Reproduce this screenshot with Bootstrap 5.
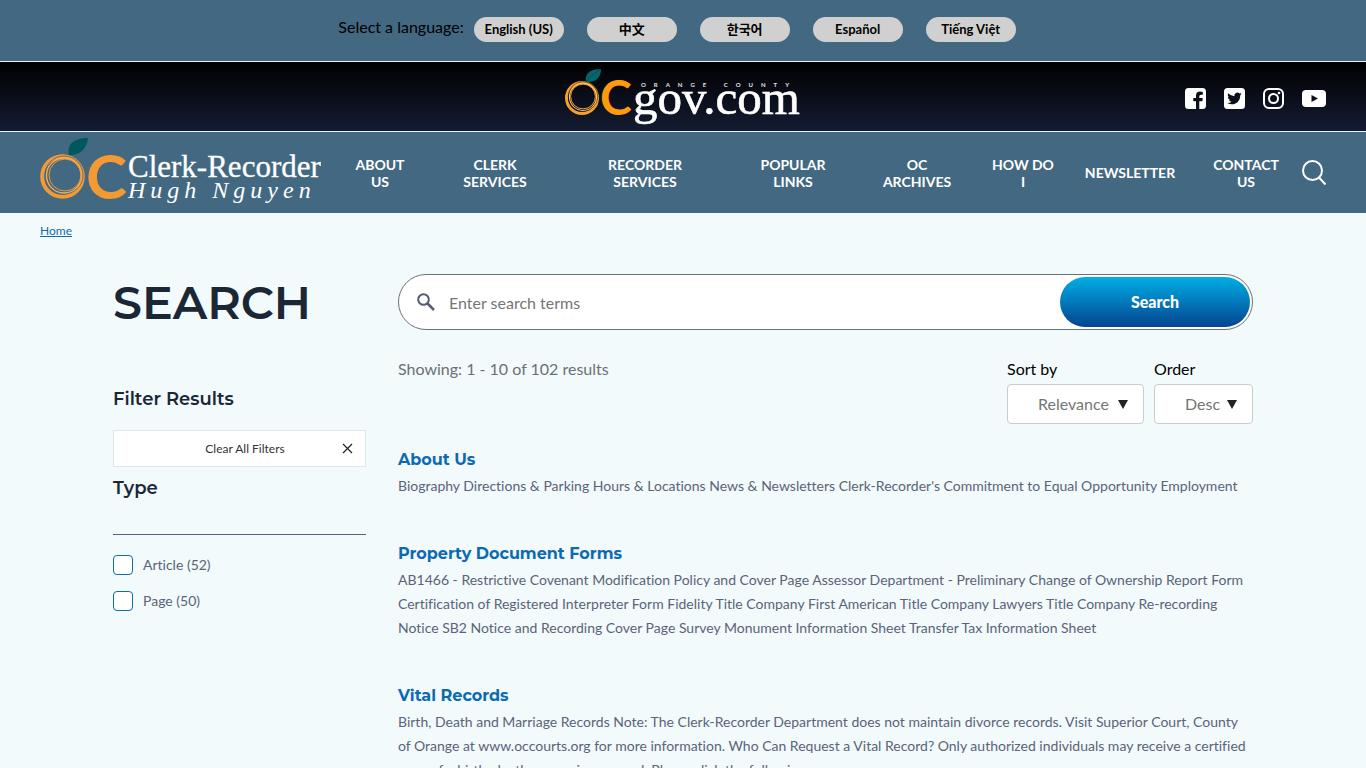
<!DOCTYPE html>
<html lang="en">
<head>
<meta charset="utf-8">
<meta name="viewport" content="width=device-width, initial-scale=1">
<title>Search | OC Clerk-Recorder</title>
<link rel="stylesheet" href="https://cdn.jsdelivr.net/npm/bootstrap@5.3.0/dist/css/bootstrap.min.css">
<style>
  body { font-family: Lato, "Noto Sans CJK SC", "Noto Sans CJK KR", sans-serif; font-size: 16px; font-variant-ligatures: none; background: #f2fafc; color: #000; }
  .bar-blue { background: #436881; }
  .lang-bar { height: 62px; padding: 15px 12px 0 0; border-bottom: 1px solid #e9f2fb; }
  .lang-list { gap: 23px; margin: 2px 0 0 10px; }
  .btn-lang { width: 90px; height: 25px; padding: 0; font-size: 13px; font-weight: 700; line-height: 25px; background: #d1d0d0; color: #000; }
  .gov-bar { height: 70px; padding: 0 40px; background: linear-gradient(#000, #141c33); border-bottom: 1px solid #e9f2fb; }
  .side-cell { flex: 1 1 0; }
  .socials { gap: 18px; padding-top: 4px; color: #fff; }
  .socials a { color: #fff; display: flex; }
  .main-nav { height: 81px; padding: 0 40px; }
  .menu-grid { display: grid; grid-template-columns: 96fr 134fr 166fr 130fr 118fr 94fr 120fr 112fr; margin-left: 11px; }
  .menu-grid a { color: #fff; font-size: 14px; font-weight: 700; line-height: 17px; text-align: center; text-decoration: none; }
  .crumbs { padding: 9px 40px 0; font-size: 12px; line-height: 18px; }
  .crumbs a { color: #0c6ab0; }
  .layout { gap: 32px; padding-top: 34px; }
  .side { flex: 0 0 253px; }
  h1, h2, h3 { font-family: Montserrat, Inter, sans-serif; color: #1b2735; margin: 0; }
  h1 { font-size: 46px; font-weight: 600; line-height: 58px; }
  .side h2 { font-size: 18px; font-weight: 600; line-height: 24px; }
  .side .filter-head { margin-top: 55px; }
  .btn-clear { height: 37px; margin-top: 19px; padding: 0 12px 0 34px; background: #fff; border: 1px solid #dfe6ec; border-radius: 0; font-size: 12px; color: #333; }
  .type-head { margin-top: 9px; padding-bottom: 34px; border-bottom: 1px solid #5b6378; }
  .facets { gap: 12px; padding-top: 18px; font-size: 14px; line-height: 24px; color: #5b6378; }
  .facets .form-check-input { width: 20px; height: 20px; margin: 0 10px 0 0; border: 1px solid #0c6ab0; border-radius: 4px; background-color: #fff; }
  .search-box { height: 56px; padding: 2px 2px 2px 18px; border: 1px solid #6b7075; border-radius: 28px; background: #fff; }
  .search-box input { font-size: 16px; color: #757575; padding: 2px 14px 0; }
  .search-box input::placeholder { color: #757575; opacity: 1; }
  .btn-find { flex: 0 0 190px; height: 50px; border: 0; border-radius: 25px; font-size: 16px; font-weight: 900; color: #fff; background: linear-gradient(#00aee6, #04448f); }
  .tools { margin-top: 27px; line-height: 24px; }
  .showing { color: #6d7073; }
  .pickers { gap: 10px; }
  .pickers .form-select { height: 40px; margin-top: 3px; padding: 0 32px 0 30px; border: 1px solid #ccc; border-radius: 4px; color: #757575; background-position: right 14px center; background-size: 12px 10px;
    background-image: url("data:image/svg+xml,%3Csvg xmlns='http://www.w3.org/2000/svg' viewBox='0 0 12 10'%3E%3Cpath d='M1 1h10L6 10z' fill='%23222'/%3E%3C/svg%3E"); }
  .pick-sort { width: 137px; }
  .pick-order { width: 99px; }
  .hits { gap: 44px; margin-top: 24px; }
  .hits h3 { font-size: 16px; font-weight: 700; line-height: 24px; }
  .hits h3 a { color: #0c6ab0; text-decoration: none; }
  .hits p { margin: 2px 0 0; font-size: 14px; line-height: 24px; color: #5b6378; }
  .logo-serif { font-family: "Liberation Serif", serif; fill: #fff; }
  .logo-sans { font-family: Lato, sans-serif; font-weight: 700; }
</style>
</head>
<body>

<div class="bar-blue lang-bar d-flex justify-content-center align-items-start">
  <span>Select a language:</span>
  <div class="lang-list d-flex">
    <button class="btn btn-lang rounded-pill border-0" type="button">English (US)</button>
    <button class="btn btn-lang rounded-pill border-0" type="button" lang="zh">中文</button>
    <button class="btn btn-lang rounded-pill border-0" type="button" lang="ko">한국어</button>
    <button class="btn btn-lang rounded-pill border-0" type="button" lang="es">Español</button>
    <button class="btn btn-lang rounded-pill border-0" type="button" lang="vi">Tiếng Việt</button>
  </div>
</div>

<header>
  <div class="gov-bar d-flex align-items-center">
    <div class="side-cell"></div>
    <a class="d-flex" href="#" aria-label="OCgov.com">
      <svg width="238" height="56" viewBox="0 0 238 56">
        <g fill="none" stroke="#f7a02b">
          <circle cx="18" cy="29" r="15.500" stroke-width="3"/>
          <circle cx="19" cy="28" r="13.600" stroke="#ffc46b" stroke-width="1.200"/>
          <circle cx="19" cy="27.500" r="14.800" stroke="#0b0f1c" stroke-width=".5"/>
          <circle cx="19" cy="27.500" r="12.400" stroke-width="1"/>
        </g>
        <path d="M22 13C20 4 27 0 37 0C37 8 32 14 22 13Z" fill="#00686a"/>
        <path d="M22 13Q27 6 37 0" fill="none" stroke="#0b3b3e" stroke-width=".6"/>
        <text class="logo-sans" x="36" y="46" font-size="48" fill="#ff9a0b">C</text>
        <text class="logo-sans" x="77" y="18" font-size="6" fill="#e6e6e6" letter-spacing="8">ORANGE COUNTY</text>
        <text class="logo-serif" x="69" y="45" font-size="49" stroke="#fff" stroke-width=".6">gov.com</text>
      </svg>
    </a>
    <div class="side-cell socials d-flex justify-content-end align-items-center">
      <a href="#" aria-label="Facebook"><svg width="21" height="21" viewBox="0 0 21 21" fill="currentColor"><path fill-rule="evenodd" d="M3.500 0H17.500A3.500 3.500 0 0 1 21 3.500V17.500A3.500 3.500 0 0 1 17.500 21H14.300V13.200H17.300L17.800 10H14.300V8.200Q14.300 6.700 16 6.700H17.800V3.900Q11 2.500 11 7.800V10H8.300V13.200H11V21H3.500A3.500 3.500 0 0 1 0 17.500V3.500A3.500 3.500 0 0 1 3.500 0Z"/></svg></a>
      <a href="#" aria-label="Twitter"><svg width="21" height="21" viewBox="0 0 21 21"><rect width="21" height="21" rx="3.500" fill="#fff"/><path transform="translate(3.300 3.300) scale(.9)" fill="#0b0f1c" d="M5 14.500c6 0 9.300-5 9.300-9.300v-.4A6.700 6.700 0 0 0 16 3.100a6.600 6.600 0 0 1-1.900.5A3.300 3.300 0 0 0 15.600 1.700a6.600 6.600 0 0 1-2.100.8A3.300 3.300 0 0 0 7.900 5.500 9.300 9.300 0 0 1 1.100 2.100a3.300 3.300 0 0 0 1 4.400A3.200 3.200 0 0 1 .6 6.100a3.300 3.300 0 0 0 2.600 3.200 3.200 3.200 0 0 1-1.500.1 3.300 3.300 0 0 0 3.100 2.200A6.600 6.600 0 0 1 0 13a9.300 9.300 0 0 0 5 1.500"/></svg></a>
      <a href="#" aria-label="Instagram"><svg width="21" height="21" viewBox="0 0 21 21" fill="none" stroke="#fff" stroke-width="2"><rect x="1" y="1" width="19" height="19" rx="5"/><circle cx="10.500" cy="10.500" r="4.500"/><circle cx="16" cy="5" r="1.300" fill="#fff" stroke="none"/></svg></a>
      <a href="#" aria-label="YouTube"><svg width="24" height="17" viewBox="0 0 24 17"><rect width="24" height="17" rx="4" fill="#fff"/><path d="M9.500 5L16 8.500L9.500 12Z" fill="#0b0f1c"/></svg></a>
    </div>
  </div>

  <nav class="bar-blue main-nav d-flex align-items-center" aria-label="Main">
    <a class="d-flex flex-shrink-0" href="#" aria-label="OC Clerk-Recorder Hugh Nguyen">
      <svg width="281" height="70" viewBox="0 0 281 70">
        <g fill="none" stroke="#f39a33">
          <circle cx="22.500" cy="38.500" r="20.300" stroke-width="4"/>
          <circle cx="24" cy="37" r="19" stroke="#436881" stroke-width=".8"/>
          <circle cx="24" cy="37.500" r="17.500" stroke="#f7ae55" stroke-width="1.400"/>
          <circle cx="25" cy="37" r="16" stroke-width="1"/>
        </g>
        <path d="M29 17C26 5 36 0 48 0C47 9 41 18 29 17Z" fill="#00585c"/>
        <text class="logo-sans" x="46" y="61" font-size="62" fill="#f39a33">C</text>
        <text class="logo-serif" x="88" y="39" font-size="31" stroke="#fff" stroke-width=".3">Clerk-Recorder</text>
        <text class="logo-serif" x="88" y="60" font-size="24" font-style="italic" letter-spacing="5">Hugh Nguyen</text>
      </svg>
    </a>
    <div class="menu-grid flex-grow-1 align-items-center">
      <a href="#">ABOUT<br>US</a>
      <a href="#">CLERK<br>SERVICES</a>
      <a href="#">RECORDER<br>SERVICES</a>
      <a href="#">POPULAR<br>LINKS</a>
      <a href="#">OC<br>ARCHIVES</a>
      <a href="#">HOW DO<br>I</a>
      <a href="#">NEWSLETTER</a>
      <a href="#">CONTACT<br>US</a>
    </div>
    <button class="btn p-0 border-0 d-flex" type="button" aria-label="Open search"><svg width="24" height="25" viewBox="0 0 24 25" fill="none" stroke="#fff" stroke-width="2"><circle cx="10.500" cy="10.500" r="9.500"/><path d="M17 17.500L23.500 24.500"/></svg></button>
  </nav>
</header>

<nav class="crumbs" aria-label="Breadcrumb"><a href="#">Home</a></nav>

<main class="container-xl px-0">
  <div class="layout d-flex align-items-start">
    <aside class="side">
      <h1>SEARCH</h1>
      <h2 class="filter-head">Filter Results</h2>
      <button class="btn btn-clear w-100 d-flex align-items-center" type="button">
        <span class="flex-grow-1">Clear All Filters</span>
        <svg width="11" height="11" viewBox="0 0 11 11" stroke="#222" stroke-width="1.200"><path d="M1 1L10 10M10 1L1 10"/></svg>
      </button>
      <h2 class="type-head">Type</h2>
      <div class="facets d-flex flex-column">
        <div class="d-flex align-items-center"><input class="form-check-input" type="checkbox" id="f-article"><label for="f-article">Article (52)</label></div>
        <div class="d-flex align-items-center"><input class="form-check-input" type="checkbox" id="f-page"><label for="f-page">Page (50)</label></div>
      </div>
    </aside>

    <section class="flex-grow-1">
      <form class="search-box d-flex align-items-center">
        <svg class="flex-shrink-0" width="18" height="18" viewBox="0 0 18 18" fill="none" stroke="#555b75" stroke-width="2"><circle cx="6.500" cy="6.500" r="5.300"/><path d="M10.500 10.500L17 17" stroke-width="2.500"/></svg>
        <input class="form-control border-0 bg-transparent shadow-none" type="text" placeholder="Enter search terms" aria-label="Search terms">
        <button class="btn btn-find" type="button">Search</button>
      </form>

      <div class="tools d-flex justify-content-between align-items-start">
        <span class="showing">Showing: 1 - 10 of 102 results</span>
        <div class="pickers d-flex">
          <div class="pick-sort"><label for="sort">Sort by</label><select class="form-select" id="sort"><option>Relevance</option></select></div>
          <div class="pick-order"><label for="order">Order</label><select class="form-select" id="order"><option>Desc</option></select></div>
        </div>
      </div>

      <div class="hits d-flex flex-column">
        <article>
          <h3><a href="#">About Us</a></h3>
          <p>Biography Directions &amp; Parking Hours &amp; Locations News &amp; Newsletters Clerk-Recorder's Commitment to Equal Opportunity Employment</p>
        </article>
        <article>
          <h3><a href="#">Property Document Forms</a></h3>
          <p>AB1466 - Restrictive Covenant Modification Policy and Cover Page Assessor Department - Preliminary Change of Ownership Report Form Certification of Registered Interpreter Form Fidelity Title Company First American Title Company Lawyers Title Company Re-recording Notice SB2 Notice and Recording Cover Page Survey Monument Information Sheet Transfer Tax Information Sheet</p>
        </article>
        <article>
          <h3><a href="#">Vital Records</a></h3>
          <p>Birth, Death and Marriage Records Note: The Clerk-Recorder Department does not maintain divorce records. Visit Superior Court, County of Orange at www.occourts.org for more information. Who Can Request a Vital Record? Only authorized individuals may receive a certified copy of a birth, death or marriage record. Please click the following:</p>
        </article>
      </div>
    </section>
  </div>
</main>

<script src="https://cdn.jsdelivr.net/npm/bootstrap@5.3.0/dist/js/bootstrap.bundle.min.js"></script>
</body>
</html>
